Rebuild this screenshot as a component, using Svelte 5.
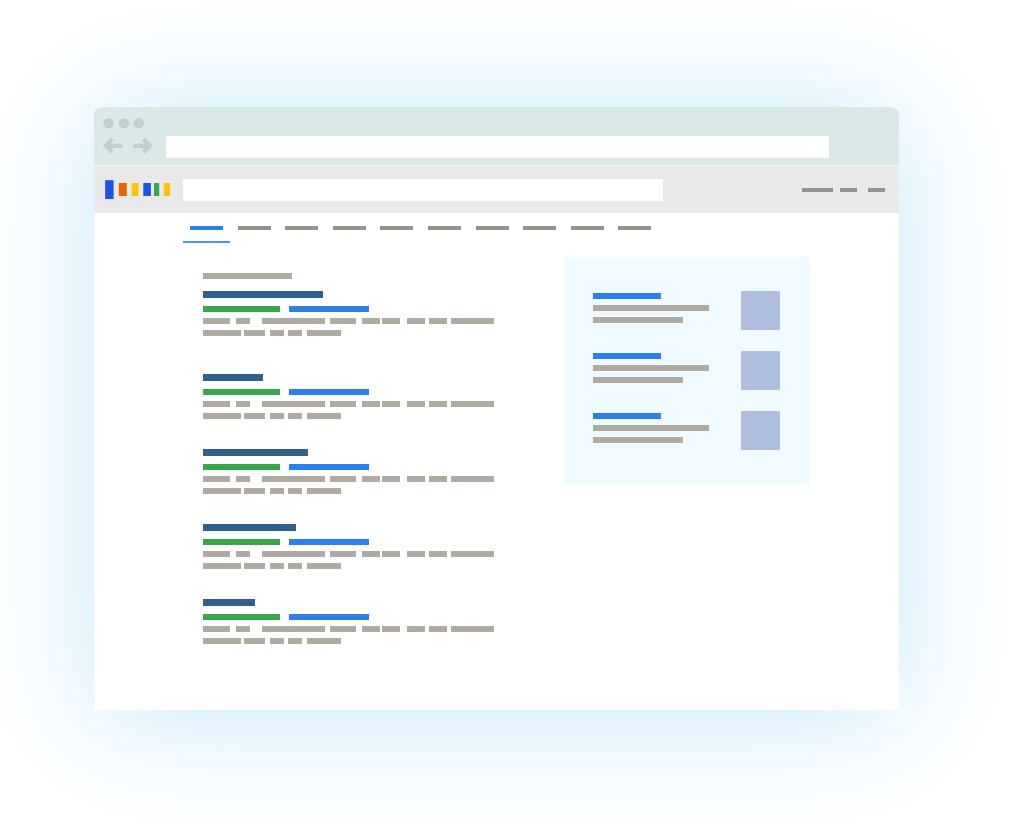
<svelte:options runes />

<script lang="ts">
	let address = $state('');
	let query = $state('');
	let activeTab = $state(0);

	const tabs = Array.from({ length: 10 }, (_, i) => i);
	const cards = [1, 2, 3];

	// space before the item, width of the item
	const menu = [
		[0, 31],
		[7, 17],
		[11, 17]
	];

	// title bar width of every result
	const results = [120, 60, 105, 93, 52];

	// snippet words: space before the word, width of the word
	const snippet = [
		[
			[0, 27],
			[6, 14],
			[12, 63],
			[5, 26],
			[6, 18],
			[2, 18],
			[7, 18],
			[4, 18],
			[4, 43]
		],
		[
			[0, 38],
			[3, 21],
			[5, 14],
			[4, 14],
			[5, 34]
		]
	];
</script>

<div class="page">
	<div class="browser">
		<header class="chrome">
			<svg class="dots" width="42" height="11" viewBox="0 0 42 11">
				<circle cx="5.600" cy="5.300" r="5.200" />
				<circle cx="20.700" cy="5.300" r="5.200" />
				<circle cx="35.900" cy="5.300" r="5.200" />
			</svg>
			<div class="address-row">
				<button class="arrow" aria-label="Back">
					<svg width="20" height="18" viewBox="0 0 20 18">
						<path d="M9.200 2.300 2.800 8.700l6.400 6.400M2.800 8.700h16.500" />
					</svg>
				</button>
				<button class="arrow" aria-label="Forward">
					<svg width="20" height="18" viewBox="0 0 20 18">
						<path d="M10.400 2.300l6.400 6.400-6.400 6.400M16.800 8.700H.2" />
					</svg>
				</button>
				<input class="address" type="text" aria-label="Address" bind:value={address} />
			</div>
		</header>

		<div class="toolbar">
			<svg class="logo" width="65" height="19" viewBox="0 0 65 19">
				<rect x="0.200" y="0.200" width="8.400" height="18.800" fill="#1f52e0" />
				<rect x="13.800" y="3" width="8" height="13" fill="#e76508" />
				<rect x="26.700" y="3" width="6.800" height="13" fill="#fec111" />
				<rect x="38.300" y="3" width="7.600" height="13" fill="#1f52e0" />
				<rect x="49" y="3" width="5.200" height="13" fill="#37a849" />
				<rect x="58.800" y="3" width="6.200" height="13" fill="#fec111" />
			</svg>
			<input class="search" type="search" aria-label="Search" bind:value={query} />
			<nav class="menu">
				{#each menu as [space, width], i}
					<a
						href="#menu-{i}"
						aria-label="Menu {i + 1}"
						style="margin-left: {space}px; width: {width}px"
					></a>
				{/each}
			</nav>
		</div>

		<div class="tabs">
			{#each tabs as tab}
				<button
					class="tab"
					class:active={tab === activeTab}
					aria-label="Tab {tab + 1}"
					onclick={() => (activeTab = tab)}
				>
					<span></span>
				</button>
			{/each}
		</div>

		<main class="content">
			<section class="results">
				<div class="count"></div>
				{#each results as width, i}
					<article class="result">
						<a class="title" href="#result-{i}" aria-label="Result {i + 1}" style="width: {width}px"></a>
						<div class="meta">
							<span class="site"></span>
							<span class="path"></span>
						</div>
						{#each snippet as line}
							<div class="line">
								{#each line as [space, word]}
									<span style="margin-left: {space}px; width: {word}px"></span>
								{/each}
							</div>
						{/each}
					</article>
				{/each}
			</section>

			<aside class="panel">
				{#each cards as card}
					<div class="card">
						<div class="card-text">
							<a class="card-title" href="#card-{card}" aria-label="Card {card}"></a>
							<span class="long"></span>
							<span class="short"></span>
						</div>
						<div class="thumb"></div>
					</div>
				{/each}
			</aside>
		</main>
	</div>
</div>

<style>
	:global(body) {
		margin: 0;
		background: #fff;
		font-family: 'Open Sans', sans-serif;
	}

	.page {
		padding: 107px 115px 123px 94px;
		overflow: hidden;
	}

	.browser {
		background: #fff;
		border-radius: 8px 8px 0 0;
		box-shadow: 0 6px 120px #c2e8fd;
	}

	button,
	input {
		border: 0;
		padding: 0;
		margin: 0;
		background: none;
		box-sizing: border-box;
	}

	.chrome {
		display: flex;
		flex-direction: column;
		gap: 7px;
		padding: 11px 70px 7px 9px;
		background: #d9e9e8;
		border-bottom: 1px solid #f5f8f8;
		border-radius: 8px 8px 0 0;
	}

	.dots {
		fill: #c1d0cf;
	}

	.address-row {
		display: flex;
		height: 22px;
	}

	.arrow {
		height: 20px;
		width: 20px;
		margin-right: 10px;
	}

	.arrow svg {
		display: block;
		fill: none;
		stroke: #c1d0cf;
		stroke-width: 4.4;
	}

	.address {
		flex: 1;
		min-width: 0;
		margin-left: 3px;
		background: #fff;
	}

	.toolbar {
		display: flex;
		align-items: center;
		height: 47px;
		padding: 0 14px 0 11px;
		background: #e9e9e9;
		box-sizing: border-box;
	}

	.logo {
		flex: none;
		margin-right: 13px;
	}

	.search {
		flex: 0 1 480px;
		min-width: 0;
		height: 22px;
		background: #fff;
		appearance: none;
	}

	.menu {
		display: flex;
		margin-left: auto;
	}

	.menu a {
		height: 4px;
		background: #95928a;
	}

	.tabs {
		display: grid;
		grid-template-columns: repeat(10, 1fr);
		max-width: 476px;
		margin-left: 89px;
		padding-top: 13px;
	}

	.tab {
		width: 47px;
		padding: 0 7px 11px;
		border-bottom: 2px solid transparent;
	}

	.tab span {
		display: block;
		height: 4px;
		background: #95928a;
	}

	.tab.active {
		border-color: #4b94ef;
	}

	.tab.active span {
		background: #2b80ec;
	}

	.content {
		display: flex;
		align-items: flex-start;
		justify-content: space-between;
		padding: 14px 89px 66px 109px;
	}

	.results {
		padding-top: 16px;
	}

	.count {
		width: 89px;
		height: 6px;
		margin-bottom: 12px;
		background: #b0aba2;
	}

	.result {
		display: flex;
		flex-direction: column;
		gap: 6px;
		margin-top: 30px;
	}

	.count + .result {
		margin: 0 0 38px;
	}

	.count + .result + .result {
		margin-top: 0;
	}

	.title {
		height: 7px;
		margin-bottom: 2px;
		background: #335f90;
	}

	.meta,
	.line {
		display: flex;
		height: 6px;
	}

	.site {
		width: 77px;
		margin-right: 9px;
		background: #37a849;
	}

	.path {
		width: 80px;
		background: #2b80ec;
	}

	.line span {
		background: #b0aba2;
	}

	.panel {
		display: flex;
		flex-direction: column;
		gap: 21px;
		width: 246px;
		padding: 34px 30px 34px 29px;
		background: #effbff;
		box-sizing: border-box;
	}

	.card {
		display: flex;
		justify-content: space-between;
	}

	.card-text {
		display: flex;
		flex-direction: column;
		gap: 6px;
		padding-top: 2px;
	}

	.card-text > * {
		height: 6px;
		background: #b0aba2;
	}

	.card-text .card-title {
		width: 68px;
		background: #2b80ec;
	}

	.long {
		width: 116px;
	}

	.short {
		width: 90px;
	}

	.thumb {
		width: 39px;
		height: 39px;
		background: #b0bedf;
	}
</style>
